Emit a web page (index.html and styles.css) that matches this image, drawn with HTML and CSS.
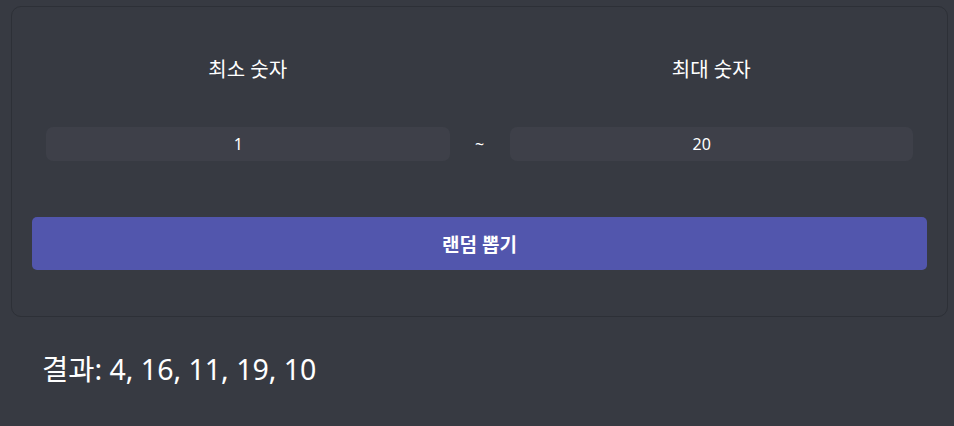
FILE: index.html
```html
<!DOCTYPE html>
<html lang="ko">
<head>
<meta charset="utf-8">
<link rel="stylesheet" href="styles.css">
</head>
<body>
<div class="card">
  <div class="range">
    <div class="label">최소 숫자</div>
    <div></div>
    <div class="label">최대 숫자</div>
    <div class="input">1</div>
    <div class="tilde">~</div>
    <div class="input">20</div>
  </div>
  <button class="btn">랜덤 뽑기</button>
</div>
<div class="result">결과: 4, 16, 11, 19, 10</div>
</body>
</html>
```
FILE: styles.css
```css
html, body {
  margin: 0;
  background: #373a42;
}
body {
  padding: 6px 6px 0 11px;
  font-family: "Noto Sans", "Noto Sans CJK KR", sans-serif;
  color: #ffffff;
}
.card {
  border: 1px solid #2d3037;
  border-radius: 10px;
  padding: 20px 20px 46px 20px;
  background: #373a42;
}
.range {
  display: grid;
  grid-template-columns: 1fr 60px 1fr;
  padding: 0 14px;
  row-gap: 44px;
  margin-top: 30px;
}
.label {
  text-align: center;
  font-size: 20px;
  line-height: 26px;
}
.input {
  background: #3e4049;
  border-radius: 7px;
  height: 34px;
  line-height: 34px;
  text-align: center;
  font-size: 16px;
  padding-right: 19px;
}
.tilde {
  text-align: center;
  line-height: 34px;
  font-size: 16px;
}
.btn {
  display: block;
  width: 100%;
  margin-top: 56px;
  height: 53px;
  border: none;
  border-radius: 5px;
  background: #5256ad;
  color: #ffffff;
  font-family: "Noto Sans", "Noto Sans CJK KR", sans-serif;
  font-weight: 700;
  font-size: 19px;
}
.result {
  padding: 0 0 0 31px;
  margin-top: 32px;
  font-size: 28.5px;
  line-height: 40px;
}
```
